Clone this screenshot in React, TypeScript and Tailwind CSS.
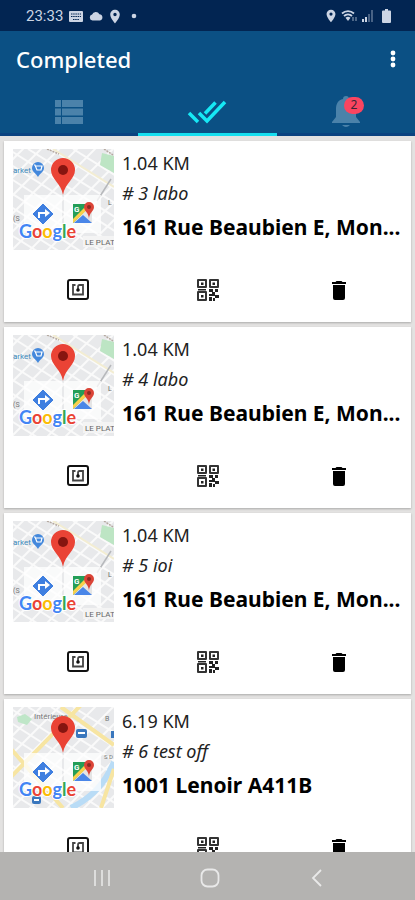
import React from 'react';

type Stop = {
  id: number;
  distance: string;
  note: string;
  address: string;
  area: 'market' | 'river';
};

const stops: Stop[] = [
  { id: 3, distance: '1.04 KM', note: '# 3 labo', address: '161 Rue Beaubien E, Mon...', area: 'market' },
  { id: 4, distance: '1.04 KM', note: '# 4 labo', address: '161 Rue Beaubien E, Mon...', area: 'market' },
  { id: 5, distance: '1.04 KM', note: '# 5 ioi', address: '161 Rue Beaubien E, Mon...', area: 'market' },
  { id: 6, distance: '6.19 KM', note: '# 6 test off', address: '1001 Lenoir A411B', area: 'river' },
];

const PIN = 'M12 2C8.13 2 5 5.13 5 9c0 5.25 7 13 7 13s7-7.75 7-13c0-3.87-3.13-7-7-7zm0 9.500a2.500 2.500 0 1 1 0-5 2.500 2.500 0 0 1 0 5z';

const StatusBar = () => (
  <div className="flex h-[31px] shrink-0 items-center justify-between bg-[#022552] pt-px pr-6 pl-[26px] text-[#ccd5e4]">
    <div className="flex items-center gap-1.5">
      <span className="font-[Roboto,sans-serif] text-[15px] leading-5">23:33</span>
      <svg width="14" height="11" viewBox="0 0 14 11">
        <rect width="14" height="11" rx="1" fill="currentColor" />
        <path d="M2 3h10M2 5.500h10M4 8.500h6" stroke="#022552" strokeWidth="1" strokeDasharray="1.500 .7" />
      </svg>
      <svg width="14" height="10" viewBox="0 0 14 10" fill="currentColor">
        <path d="M3.500 9.500a3 3 0 0 1-.4-5.900 4 4 0 0 1 7.300-.4A3.200 3.200 0 0 1 11 9.500z" />
      </svg>
      <svg width="12" height="15" viewBox="4 1 16 22" fill="currentColor"><path d={PIN} /></svg>
      <svg width="14" height="6" viewBox="0 0 14 6" fill="currentColor"><circle cx="7" cy="3" r="2.300" /></svg>
    </div>
    <div className="flex items-center gap-1">
      <svg width="12" height="14" viewBox="4 1 16 22" fill="currentColor"><path d={PIN} /></svg>
      <svg width="17" height="14" viewBox="0 0 17 14" fill="none" stroke="currentColor">
        <path d="M1 4.500a9 9 0 0 1 12 0M3 7a6 6 0 0 1 8 0" strokeWidth="1.800" />
        <path d="M4.500 8.800a4 4 0 0 1 5 0L7 12z" fill="currentColor" stroke="none" />
        <path d="M12 8v4M15 8v4" strokeWidth="1.500" opacity=".5" />
      </svg>
      <svg width="12" height="12" viewBox="0 0 12 12" fill="currentColor">
        <path d="M0 9h2v3H0zM3 7h2v5H3z" />
        <path d="M6 4h2v8H6zM9 0h2v12H9z" opacity=".35" />
      </svg>
      <svg className="ml-1" width="9" height="14" viewBox="0 0 9 14" fill="currentColor">
        <path d="M3 0h3v1.500h2q1 0 1 1V13q0 1-1 1H1q-1 0-1-1V2.500q0-1 1-1h2z" />
      </svg>
    </div>
  </div>
);

const Header = () => (
  <header className="shrink-0 bg-[#0b5084]">
    <div className="flex h-[59px] items-center justify-between pr-3 pb-1 pl-4">
      <h1 className="text-[22px] leading-7 font-medium text-white">Completed</h1>
      <button type="button" aria-label="More options" className="flex h-8 w-5 items-center justify-center">
        <svg width="6" height="18" viewBox="0 0 6 18" fill="#fff">
          <circle cx="3" cy="3" r="2.400" /><circle cx="3" cy="9" r="2.400" /><circle cx="3" cy="15" r="2.400" />
        </svg>
      </button>
    </div>
    <nav className="grid grid-cols-3">
      <button type="button" aria-label="List" className="flex h-[46px] items-center justify-center border-b-[3px] border-[#0b4380]">
        <svg width="30" height="26" viewBox="0 0 30 26" fill="#4b82aa">
          <path d="M1 1h6v7H1zM8 1h21v7H8zM1 9.500h6v7H1zM8 9.500h21v7H8zM1 18h6v7H1zM8 18h21v7H8z" />
        </svg>
      </button>
      <button type="button" aria-label="Completed" className="flex h-[46px] items-center justify-center border-b-[3px] border-[#16dff0]">
        <svg width="40" height="26" viewBox="0 0 40 26" fill="none" stroke="#16e8f5" strokeWidth="3.500">
          <path d="M2 14l9 9M12 14l8 8L38 3M18 14.500L28.500 3.500" />
        </svg>
      </button>
      <button type="button" aria-label="Notifications" className="flex h-[46px] items-center justify-center border-b-[3px] border-[#0b4380]">
        <span className="relative">
          <svg width="28" height="34" viewBox="0 0 28 34" fill="#4b82aa">
            <path d="M14 1c2 0 3 1 3 3 5 1 7 5 7 10v8l4 5v1H0v-1l4-5v-8C4 9 6 5 11 4c0-2 1-3 3-3zM10 30h8q-4 4-8 0z" />
          </svg>
          <span className="absolute top-[2px] -right-[4px] flex h-[17px] w-5 items-center justify-center rounded-full bg-[#fb4560] text-xs text-[#3a2635]">2</span>
        </span>
      </button>
    </nav>
  </header>
);

const MapThumb = ({ area }: { area: Stop['area'] }) => (
  <svg className="size-[101px] shrink-0" viewBox="0 0 101 101" fontFamily="Roboto, sans-serif">
    <rect width="101" height="101" fill="#e8e9eb" />
    <g stroke="#fafafa" strokeWidth="2">
      <path d="M-10 20L40-30M-10 38L60-32M-10 56L80-34M-10 74L100-36M-10 92L110-28M-10 110L110-10M8 110L110 8M26 110L110 26M44 110L110 44M62 110L110 62M80 110L110 80" />
      <path d="M-5 0L105 70M-5 14L105 84M-5 28L105 98M-5 42L95 106M-5 56L75 107M-5 70L55 108M15 0L105 56M38 0L105 42M60 0L105 28M-5 84L35 109" />
    </g>
    {area === 'market' ? (
      <g>
        <path d="M89 4l12 3v17l-14-8z" fill="#bde5c4" />
        <path d="M40 0L101 38" stroke="#f3edd2" strokeWidth="2" />
        <path d="M34 0l12 5M91 0l9 6" stroke="#b5a9a0" strokeWidth="1.500" strokeDasharray="2 1" />
        <path d="M84 52L98 30" stroke="#b6b8bb" strokeWidth="1.500" />
        <text x="0" y="24" fontSize="8" fill="#3e8bbd">arket</text>
        <path d="M25 13a6 6 0 0 1 6 6c0 4-4 5-6 9-2-4-6-5-6-9a6 6 0 0 1 6-6z" fill="#4388dc" />
        <path d="M21 16h1l2 5h4l1-4h-6" fill="none" stroke="#fff" strokeWidth="1.200" />
        <rect x="70" y="87" width="31" height="11" fill="#f4f4f4" />
        <text x="72" y="96" fontSize="8" fill="#666">LE PLAT</text>
        <text x="95" y="56" fontSize="7" fill="#666">L</text>
        <text x="0" y="72" fontSize="7" fill="#777">(S</text>
      </g>
    ) : (
      <g>
        <path d="M4 10l8-3 7 5-5 6-9-3z" fill="#bfe6c8" />
        <path d="M101 55C92 76 80 90 58 101" stroke="#b9dcf6" strokeWidth="6" fill="none" />
        <path d="M-2 70L68-2M-2 42L50 101M88 101L101 62M48 0l53 38" stroke="#f7e5a2" strokeWidth="4" fill="none" />
        <text x="21" y="12" fontSize="8" fill="#777">Intérieure</text>
        <text x="92" y="14" fontSize="7" fill="#777">B</text>
        <text x="91" y="52" fontSize="6" fill="#777">S D</text>
        <rect x="63" y="22" width="11" height="9" rx="2" fill="#3a77bd" />
        <rect x="19" y="89" width="9" height="8" rx="2" fill="#3a77bd" />
        <rect x="98" y="24" width="3" height="7" fill="#3a77bd" />
        <path d="M65 26h7M21 93h5" stroke="#fff" strokeWidth="2" />
      </g>
    )}
    <path d="M11 46h38v38H11zM51 46h37v38H51z" fill="#fff" opacity=".75" />
    <text x="6" y="89" fontSize="18" strokeWidth="2" stroke="#fff" paintOrder="stroke" fontFamily="Lato, sans-serif" fontWeight="bold">
      <tspan fill="#4285f4">G</tspan><tspan fill="#ea4335">o</tspan><tspan fill="#fbbc05">o</tspan><tspan fill="#4285f4">g</tspan><tspan fill="#34a853">l</tspan><tspan fill="#ea4335">e</tspan>
    </text>
    <path d="M30 55l10 10-10 10-10-10z" fill="#3f7fe0" stroke="#3f7fe0" strokeLinejoin="round" />
    <path d="M26 69v-5h7" fill="none" stroke="#fff" strokeWidth="2" />
    <path d="M32 60l5 4-5 4z" fill="#fff" />
    <path d="M60 55h19v19H60z" fill="#249e57" />
    <path d="M60 74l19-19v19z" fill="#e5e5e5" />
    <path d="M60 70l14-14 3 2-17 16z" fill="#fbd04a" />
    <path d="M61 74l9-8 9 8z" fill="#4a86e8" />
    <text x="61" y="63" fontSize="8" fontWeight="bold" fill="#fff">G</text>
    <path d="M76 53a5 5 0 0 1 5 5c0 4-5 6-5 12 0-6-5-8-5-12a5 5 0 0 1 5-5z" fill="#db4437" />
    <circle cx="76" cy="58" r="2" fill="#8c2b22" />
    <path d="M50 9a12 12 0 0 1 12 12c0 9-10 13-12 25-2-12-12-16-12-25A12 12 0 0 1 50 9z" fill="#ea4335" />
    <circle cx="50" cy="21" r="5" fill="#861510" />
  </svg>
);

const NfcIcon = () => (
  <svg width="22" height="22" viewBox="0 0 22 22" fill="none" stroke="#111">
    <rect x="1" y="1" width="20" height="19" rx="2" strokeWidth="2" />
    <path d="M8.500 6H6v9.500h10V6h-3.500q-1.500 0-1.500 2v3" strokeWidth="1.800" stroke="#444" />
    <circle cx="11" cy="11" r="1.800" fill="#111" stroke="none" />
  </svg>
);

const QrIcon = () => (
  <svg width="22" height="22" viewBox="0 0 22 22" fill="none" stroke="#333">
    <path d="M1 1h8v7H1zM13 1h8v7h-8zM1 13h8v8H1z" strokeWidth="2" strokeLinejoin="round" />
    <path d="M4 3.500h2.500V6H4zM15.500 3.500H18V6h-2.500zM4 16h2.500v2.500H4zM1 10h8v1.500H1zM12 10h4v3h-4zM18 10h3v3h-3zM12 15h3v2h-3zM15 13h3v4h-3zM18 16h4v3h-4zM12 18h3v4h-3zM16 19h2v3h-2z" fill="#222" stroke="none" />
  </svg>
);

const TrashIcon = () => (
  <svg width="14" height="19" viewBox="0 0 14 19" fill="#000">
    <path d="M0 1h3.500l1-1h5l1 1H14v2H0zM1 4h12v13q0 2-2 2H3q-2 0-2-2z" />
  </svg>
);

const StopCard = ({ stop }: { stop: Stop }) => (
  <li className="shrink-0 bg-white pt-2 pr-[7px] pl-[9px] shadow-[0_1px_2px_rgba(0,0,0,0.25)]">
    <div className="flex gap-2">
      <MapThumb area={stop.area} />
      <div className="min-w-0 flex-1 whitespace-nowrap text-black">
        <p className="text-[18px] leading-7 text-[#222]">{stop.distance}</p>
        <p className="text-[18px] leading-8 text-[#222] italic">{stop.note}</p>
        <h2 className="text-[21px] leading-9 font-bold">{stop.address}</h2>
      </div>
    </div>
    <div className="mt-2 grid h-16 grid-cols-3">
      <button type="button" aria-label="NFC" className="flex items-center justify-center"><NfcIcon /></button>
      <button type="button" aria-label="QR code" className="flex items-center justify-center"><QrIcon /></button>
      <button type="button" aria-label="Delete" className="flex items-center justify-center"><TrashIcon /></button>
    </div>
  </li>
);

const SystemNav = () => (
  <nav className="flex h-12 shrink-0 items-center justify-around bg-[#b4b3b1] px-12 pt-1">
    <button type="button" aria-label="Recents">
      <svg width="18" height="18" viewBox="0 0 18 18" stroke="#e2e2e1" strokeWidth="1.800"><path d="M2 1v16M9 1v16M16 1v16" /></svg>
    </button>
    <button type="button" aria-label="Home">
      <svg width="20" height="20" viewBox="0 0 20 20" fill="none" stroke="#e9e9e9" strokeWidth="1.800"><rect x="1.500" y="1.500" width="17" height="17" rx="6" /></svg>
    </button>
    <button type="button" aria-label="Back">
      <svg width="12" height="18" viewBox="0 0 12 18" fill="none" stroke="#e9e9e9" strokeWidth="1.800"><path d="M11 1L3 9l8 8" /></svg>
    </button>
  </nav>
);

export default function App() {
  return (
    <div className="flex h-screen flex-col overflow-hidden bg-[#e3e2e1] font-['Noto_Sans',sans-serif]">
      <StatusBar />
      <Header />
      <main className="min-h-0 flex-1 overflow-y-auto [scrollbar-width:none]">
        <ul className="flex flex-col gap-[5px] px-1 py-[5px]">
          {stops.map((stop) => <StopCard key={stop.id} stop={stop} />)}
        </ul>
      </main>
      <SystemNav />
    </div>
  );
}
